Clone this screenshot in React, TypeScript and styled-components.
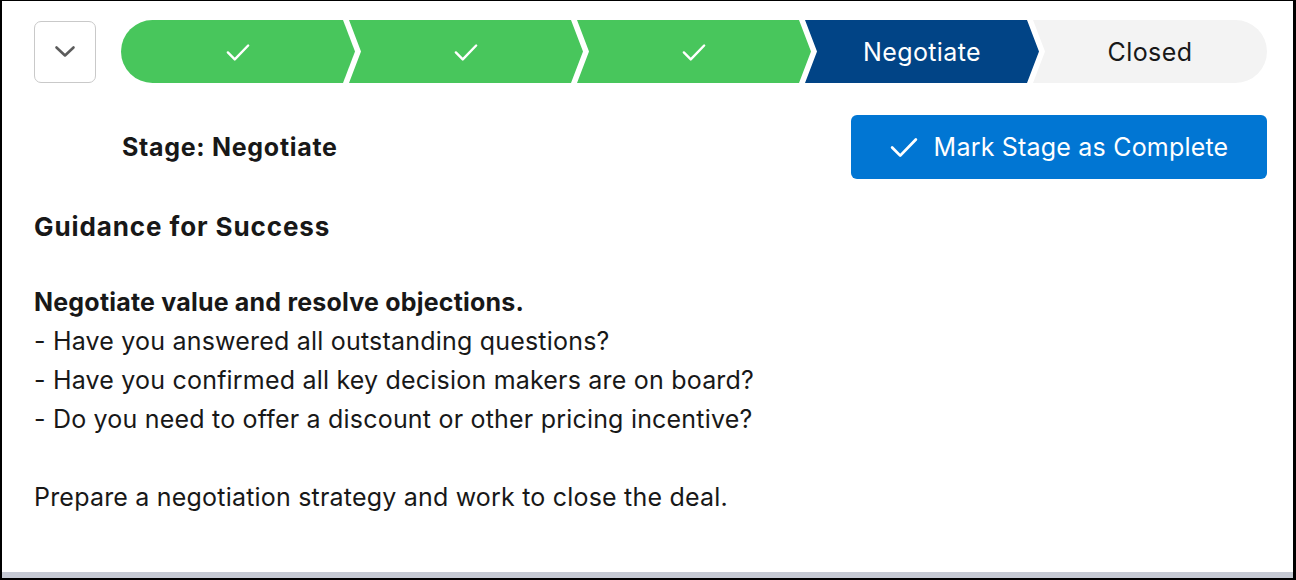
import styled, { createGlobalStyle } from 'styled-components';

const GlobalStyle = createGlobalStyle`
  html, body {
    margin: 0;
    padding: 0;
    background: #000;
  }
  * {
    box-sizing: border-box;
  }
`;

const CHEVRON = 12;
const GAP = 6;

const Frame = styled.div`
  width: 1296px;
  height: 580px;
  background: #000;
  padding: 1px 3px 2px 2px;
  display: flex;
  flex-direction: column;
`;

const Card = styled.div`
  flex: 1;
  background: #fff;
  font-family: Inter, 'Open Sans', sans-serif;
  color: #181818;
  padding: 19px 26px 0 32px;
  display: flex;
  flex-direction: column;
  border-bottom: 6px solid #c6cad4;
`;

const PathRow = styled.div`
  display: flex;
  align-items: center;
  gap: 25px;
  height: 63px;
`;

const ToggleButton = styled.button`
  width: 62px;
  height: 62px;
  flex: none;
  border: 1px solid #c9c9c9;
  border-radius: 7px;
  background: #fff;
  display: flex;
  align-items: center;
  justify-content: center;
  padding: 0;
  color: #5c5c5c;
`;

const Steps = styled.div`
  flex: 1;
  display: flex;
  height: 63px;
`;

type StepKind = 'complete' | 'current' | 'incomplete';

const stepColors: Record<StepKind, { bg: string; fg: string }> = {
  complete: { bg: '#48c65c', fg: '#fff' },
  current: { bg: '#014486', fg: '#fff' },
  incomplete: { bg: '#f3f3f3', fg: '#181818' },
};

const Step = styled.div<{ $kind: StepKind; $first?: boolean; $last?: boolean }>`
  flex: 1 1 0;
  min-width: 0;
  height: 100%;
  display: flex;
  align-items: center;
  justify-content: center;
  font-size: 25px;
  letter-spacing: 0.4px;
  background: ${(p) => stepColors[p.$kind].bg};
  color: ${(p) => stepColors[p.$kind].fg};
  margin-left: ${(p) => (p.$first ? 0 : -(CHEVRON - GAP))}px;
  border-radius: ${(p) => (p.$first ? '32px 0 0 32px' : p.$last ? '0 32px 32px 0' : '0')};
  clip-path: ${(p) => {
    const right = p.$last
      ? '100% 0, 100% 100%'
      : `calc(100% - ${CHEVRON}px) 0, 100% 50%, calc(100% - ${CHEVRON}px) 100%`;
    const left = p.$first ? '0 100%, 0 0' : `0 100%, ${CHEVRON}px 50%, 0 0`;
    return `polygon(0 0, ${right}, ${left})`;
  }};
`;

const StageRow = styled.div`
  display: flex;
  align-items: center;
  justify-content: space-between;
  margin-top: 32px;
  padding-left: 88px;
`;

const StageLabel = styled.div`
  font-size: 25px;
  font-weight: 700;
  letter-spacing: 0.7px;
`;

const CompleteButton = styled.button`
  width: 416px;
  height: 64px;
  border: none;
  border-radius: 6px;
  background: #0176d3;
  color: #fff;
  font-family: inherit;
  font-size: 25px;
  letter-spacing: 0.2px;
  display: flex;
  align-items: center;
  justify-content: center;
  gap: 16px;
`;

const GuidanceTitle = styled.h2`
  margin: 33px 0 0;
  font-size: 26px;
  font-weight: 700;
  letter-spacing: 0.9px;
  line-height: 30px;
`;

const GuidanceBody = styled.div`
  margin-top: 41px;
  font-size: 25px;
  letter-spacing: 0.2px;
  line-height: 39px;
`;

const Line = styled.div<{ $bold?: boolean; $spaced?: boolean }>`
  font-weight: ${(p) => (p.$bold ? 700 : 400)};
  margin-top: ${(p) => (p.$spaced ? 39 : 0)}px;
`;

const Check = ({ size = 24 }: { size?: number }) => (
  <svg width={size} height={size} viewBox="0 0 26 26" fill="none">
    <path d="M2 13.5 L9.5 21 L24 6" stroke="currentColor" strokeWidth="2.6" strokeLinecap="round" strokeLinejoin="round" />
  </svg>
);

const ChevronDown = () => (
  <svg width="22" height="14" viewBox="0 0 22 14" fill="none">
    <path d="M2.5 2.5 L11 10.5 L19.5 2.5" stroke="currentColor" strokeWidth="2.6" strokeLinecap="round" strokeLinejoin="round" />
  </svg>
);

const steps: { label?: string; kind: StepKind }[] = [
  { kind: 'complete' },
  { kind: 'complete' },
  { kind: 'complete' },
  { label: 'Negotiate', kind: 'current' },
  { label: 'Closed', kind: 'incomplete' },
];

export default function App() {
  return (
    <>
      <GlobalStyle />
      <Frame>
        <Card>
          <PathRow>
            <ToggleButton aria-label="Toggle guidance">
              <ChevronDown />
            </ToggleButton>
            <Steps>
              {steps.map((s, i) => (
                <Step key={i} $kind={s.kind} $first={i === 0} $last={i === steps.length - 1}>
                  {s.label ?? <Check />}
                </Step>
              ))}
            </Steps>
          </PathRow>
          <StageRow>
            <StageLabel>Stage: Negotiate</StageLabel>
            <CompleteButton>
              <Check size={28} />
              Mark Stage as Complete
            </CompleteButton>
          </StageRow>
          <GuidanceTitle>Guidance for Success</GuidanceTitle>
          <GuidanceBody>
            <Line $bold>Negotiate value and resolve objections.</Line>
            <Line>- Have you answered all outstanding questions?</Line>
            <Line>- Have you confirmed all key decision makers are on board?</Line>
            <Line>- Do you need to offer a discount or other pricing incentive?</Line>
            <Line $spaced>Prepare a negotiation strategy and work to close the deal.</Line>
          </GuidanceBody>
        </Card>
      </Frame>
    </>
  );
}
